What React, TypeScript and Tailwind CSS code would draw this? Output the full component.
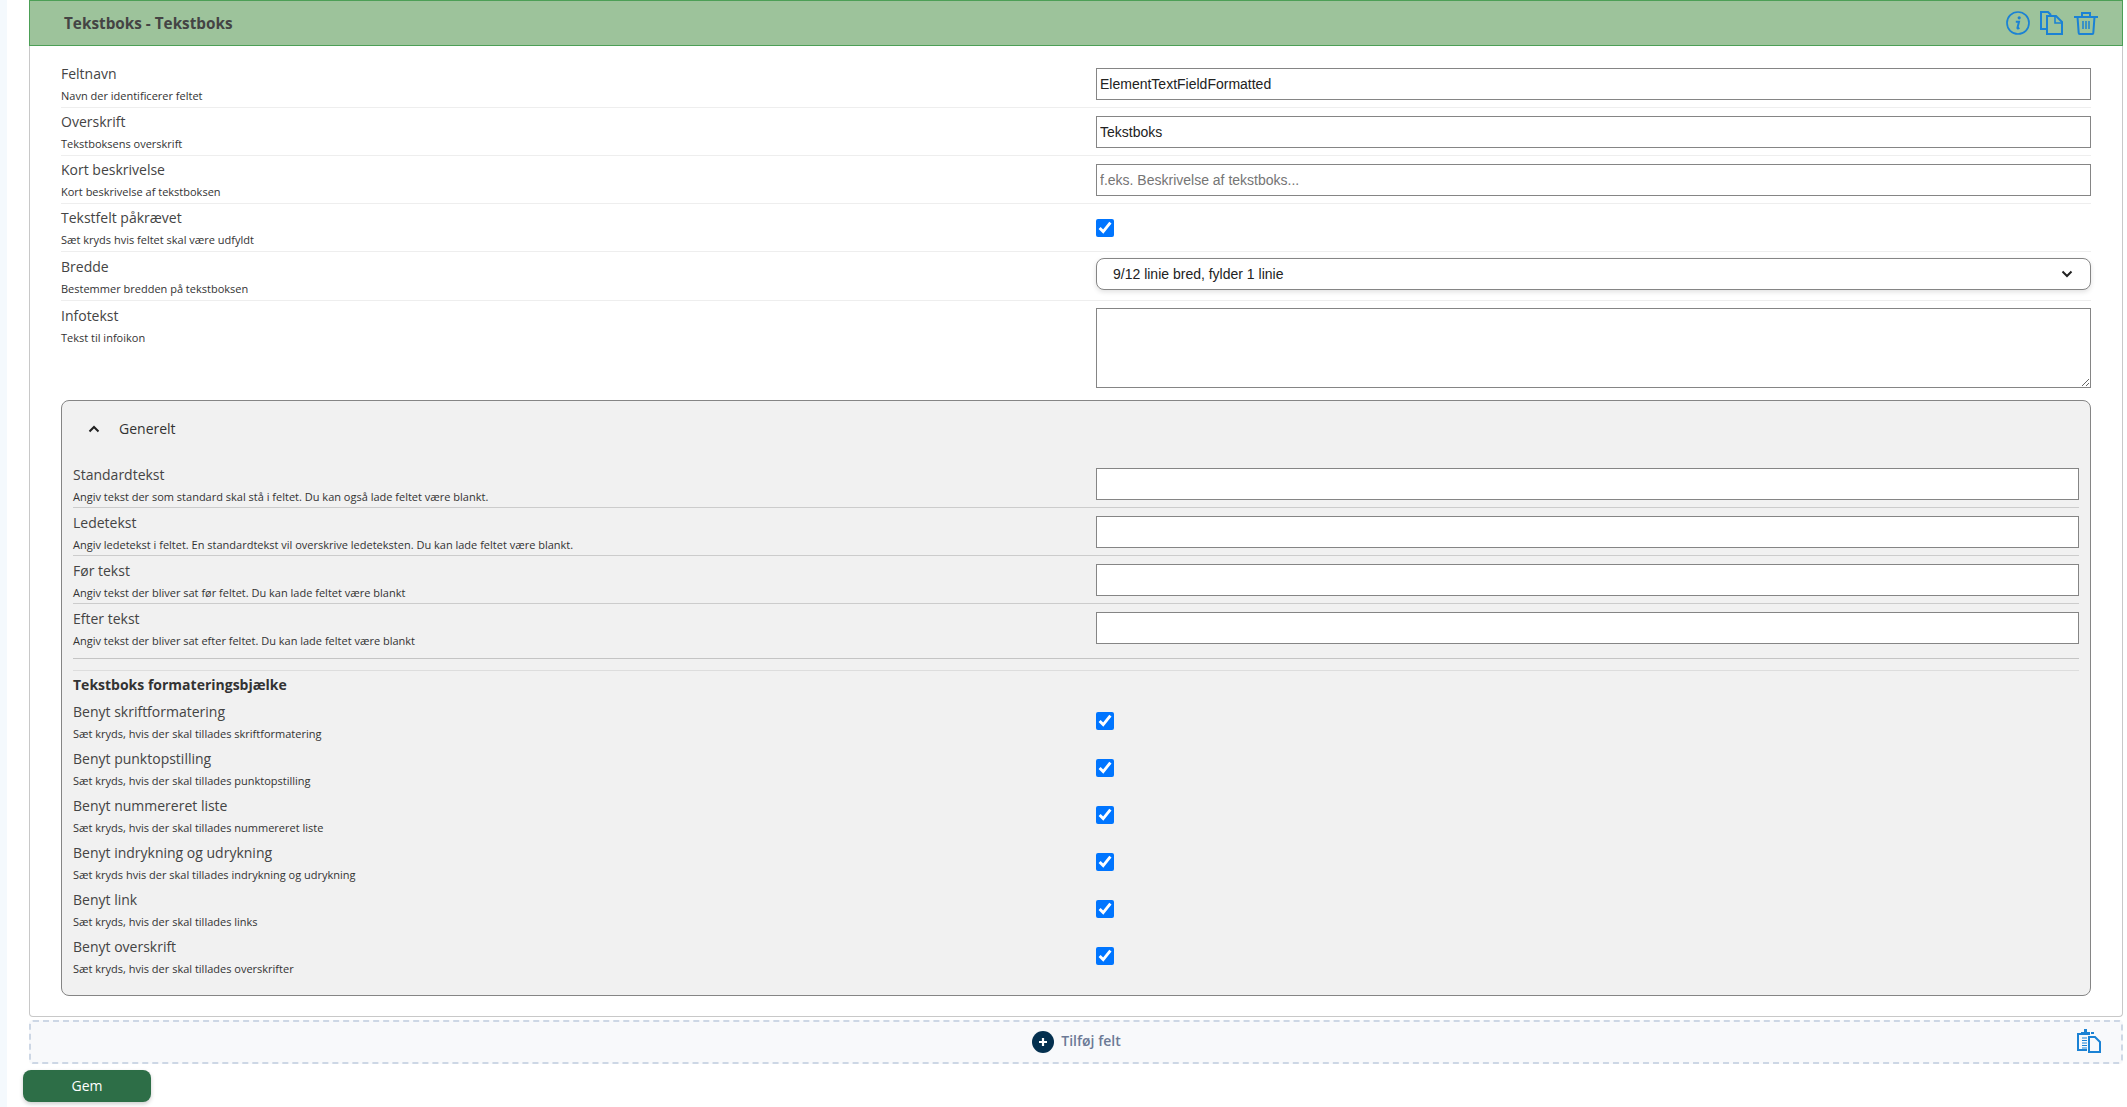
import React from "react";

const sans = "font-['Open_Sans',sans-serif]";
const arial = "font-['Liberation_Sans',Arial,sans-serif]";
const inputCls = `block w-full h-[32px] bg-white border border-[#858585] px-[3px] text-[14px] text-[#222] placeholder:text-[#757575] outline-none ${arial}`;

function Text({ label, sub, pt = "pt-[5px]" }: { label: string; sub: string; pt?: string }) {
  return (
    <div className={pt}>
      <div className="h-[20px] text-[14px] leading-[20px] text-[#444]">{label}</div>
      <div className="mt-[5px] h-[14px] text-[11px] leading-[14px] text-[#333]">{sub}</div>
    </div>
  );
}

function Row({ label, sub, left, line = "border-[#eeeeee]", h = "h-[48px]", pt, children }: { label: string; sub: string; left: string; line?: string; h?: string; pt?: string; children: React.ReactNode }) {
  return (
    <div className={`flex items-center border-b ${line} ${h}`}>
      <div className={`self-start shrink-0 ${left}`}><Text label={label} sub={sub} pt={pt} /></div>
      <div className="flex-1">{children}</div>
    </div>
  );
}

const Check = () => <input type="checkbox" defaultChecked className="block w-[18px] h-[18px] m-0" />;

const checks = [
  ["Benyt skriftformatering", "Sæt kryds, hvis der skal tillades skriftformatering"],
  ["Benyt punktopstilling", "Sæt kryds, hvis der skal tillades punktopstilling"],
  ["Benyt nummereret liste", "Sæt kryds, hvis der skal tillades nummereret liste"],
  ["Benyt indrykning og udrykning", "Sæt kryds hvis der skal tillades indrykning og udrykning"],
  ["Benyt link", "Sæt kryds, hvis der skal tillades links"],
  ["Benyt overskrift", "Sæt kryds, hvis der skal tillades overskrifter"],
];

const general = [
  ["Standardtekst", "Angiv tekst der som standard skal stå i feltet. Du kan også lade feltet være blankt."],
  ["Ledetekst", "Angiv ledetekst i feltet. En standardtekst vil overskrive ledeteksten. Du kan lade feltet være blankt."],
  ["Før tekst", "Angiv tekst der bliver sat før feltet. Du kan lade feltet være blankt"],
  ["Efter tekst", "Angiv tekst der bliver sat efter feltet. Du kan lade feltet være blankt"],
];

const blue = "#1b82d4";

export default function App() {
  return (
    <div className={`flex min-h-[1107px] bg-white overflow-hidden ${sans}`}>
      <div className="w-[7px] shrink-0 bg-[#f4f9fd]" />
      <div className="ml-[22px] w-[2094px] shrink-0">
        <div className="h-[1017px] border-x border-b border-[#c8c8c8] rounded-b-[4px] bg-white">
          <div className="-mx-px flex items-center justify-between h-[46px] bg-[#9dc39b] border border-[#4c9f56] pl-[34px] pr-[24px]">
            <div className="text-[15.3px] font-bold text-[#444]">Tekstboks - Tekstboks</div>
            <div className="flex items-center gap-[10px]">
              <svg width="24" height="24" viewBox="0 0 24 24" fill="none" stroke={blue}>
                <circle cx="12" cy="12" r="11" strokeWidth="1.7" />
                <circle cx="13.2" cy="6.8" r="1.6" fill={blue} stroke="none" />
                <path d="M9.8 10.8h3.2l-1.5 6c-.2.9.5 1 1.9.1" strokeWidth="2" />
              </svg>
              <svg width="23" height="24" viewBox="0 0 23 24" fill="none" stroke={blue} strokeWidth="2">
                <path d="M7 18H1V1h7l3 3" />
                <path d="M7 5h9l6 6v12H7z" />
                <path d="M15 5v7h7" strokeWidth="1.6" />
              </svg>
              <svg className="ml-px" width="24" height="24" viewBox="0 0 24 24" fill="none" stroke={blue} strokeWidth="2">
                <path d="M0 6h24" />
                <path d="M8 5V2h8v3" />
                <path d="M3.5 6l1.2 16a1 1 0 0 0 1 1h12.6a1 1 0 0 0 1-1L20.5 6" />
                <path d="M9 10v8M12 10v8M15 10v8" strokeWidth="1.5" />
              </svg>
            </div>
          </div>

          <div className="pt-[14px] px-[31px]">
            <Row pt="pt-[4px]" label="Feltnavn" sub="Navn der identificerer feltet" left="w-[1035px]"><input className={inputCls} defaultValue="ElementTextFieldFormatted" /></Row>
            <Row pt="pt-[4px]" label="Overskrift" sub="Tekstboksens overskrift" left="w-[1035px]"><input className={inputCls} defaultValue="Tekstboks" /></Row>
            <Row pt="pt-[4px]" label="Kort beskrivelse" sub="Kort beskrivelse af tekstboksen" left="w-[1035px]"><input className={inputCls} placeholder="f.eks. Beskrivelse af tekstboks..." /></Row>
            <Row pt="pt-[4px]" label="Tekstfelt påkrævet" sub="Sæt kryds hvis feltet skal være udfyldt" left="w-[1035px]"><Check /></Row>
            <Row label="Bredde" sub="Bestemmer bredden på tekstboksen" left="w-[1035px]" h="h-[49px]">
              <div className="relative mb-[4px]">
                <select className={`block w-full h-[32px] appearance-none bg-white border border-[#858585] rounded-[8px] pl-[16px] text-[14px] text-[#222] shadow-[0_2px_5px_rgba(0,0,0,0.12)] outline-none ${arial}`}>
                  <option>9/12 linie bred, fylder 1 linie</option>
                </select>
                <svg className="absolute right-[18px] top-[12px]" width="12" height="8" viewBox="0 0 12 8" fill="none" stroke="#222" strokeWidth="2">
                  <path d="M1.5 1.5L6 6l4.5-4.5" />
                </svg>
              </div>
            </Row>
            <div className="flex h-[99px] pt-[7px]">
              <div className="w-[1035px] shrink-0 -mt-[7px]"><Text label="Infotekst" sub="Tekst til infoikon" /></div>
              <textarea className={`block flex-1 h-[80px] bg-white border border-[#858585] outline-none ${arial}`} />
            </div>

            <div className="h-[596px] border border-[#858585] rounded-[8px] bg-[#f1f1f1] px-[11px]">
              <div className="flex items-center h-[59px] pb-[4px] pl-[15px] text-[14px] text-[#333]">
                <svg width="12" height="8" viewBox="0 0 12 8" fill="none" stroke="#222" strokeWidth="2">
                  <path d="M1.5 6.5L6 2l4.5 4.5" />
                </svg>
                <span className="ml-[19px]">Generelt</span>
              </div>
              {general.map(([l, s], i) => (
                <Row key={l} label={l} sub={s} left="w-[1023px]" line={i < 3 ? "border-[#cccccc]" : "border-transparent"}><input className={inputCls} /></Row>
              ))}
              <div className="h-[7px] border-b border-[#c4c4c4]" />
              <div className="h-[12px] border-b border-[#dddddd]" />
              <div className="h-[26px] flex items-center text-[14px] font-bold text-[#333]">Tekstboks formateringsbjælke</div>
              {checks.map(([l, s]) => (
                <div key={l} className="flex items-center h-[47px]">
                  <div className="w-[1023px] shrink-0 self-start"><Text label={l} sub={s} /></div>
                  <Check />
                </div>
              ))}
            </div>
          </div>
        </div>

        <div className="relative flex items-center justify-center mt-[3px] h-[44px] border-2 border-dashed border-[#cdd7e5] rounded-[4px] bg-[#f8f9fb]">
          <div className="flex items-center gap-[7px] ml-[1px] pb-[3px]">
            <span className="flex items-center justify-center w-[22px] h-[22px] mt-[2px] rounded-full bg-[#04304f]">
              <svg width="10" height="10" viewBox="0 0 10 10" stroke="#fff" strokeWidth="2.2"><path d="M5 1v8M1 5h8" /></svg>
            </span>
            <span className="text-[14px] font-semibold text-[#6c7a96]">Tilføj felt</span>
          </div>
          <svg className="absolute right-[19px] top-[7px]" width="25" height="25" viewBox="0 0 25 25" fill="none" stroke={blue}>
            <path d="M10 21H1V5h3" strokeWidth="2" />
            <path d="M4 6V3h3V0h3v3h3v3z" fill={blue} stroke="none" />
            <path d="M5 9h5M5 11.5h5M5 14h5M5 16.5h5M5 19h5" strokeWidth="1" />
            <path d="M12 8h6l5 5v10H12z" strokeWidth="2" />
            <path d="M14 3h3v2h-3z" fill={blue} stroke="none" />
          </svg>
        </div>

        <button className="block -ml-[6px] mt-[6px] w-[128px] h-[32px] pb-[1px] rounded-[8px] bg-[#2d6e47] text-[14px] text-white shadow-[0_2px_4px_rgba(0,0,0,0.2)]">Gem</button>
      </div>
    </div>
  );
}
